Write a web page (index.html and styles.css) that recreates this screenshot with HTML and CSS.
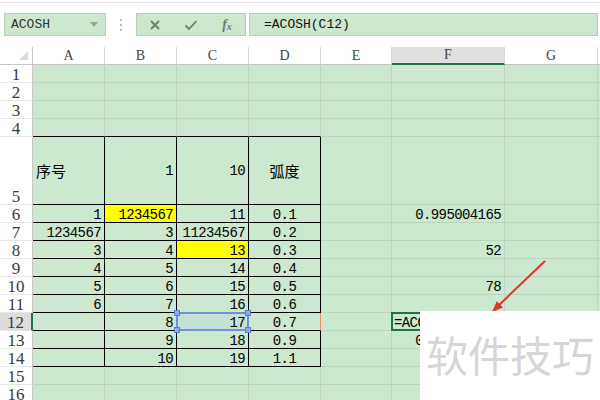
FILE: index.html
```html
<!DOCTYPE html>
<html>
<head>
<meta charset="utf-8">
<link rel="stylesheet" href="styles.css">
</head>
<body>
<div class="app">
  <div class="topline"></div>
  <div class="toolbar">
    <div class="namebox"><span>ACOSH</span><svg class="caret" width="8" height="5" viewBox="0 0 8 5"><path d="M0 0H8L4 5Z"/></svg></div>
    <div class="grip"><i></i><i></i><i></i></div>
    <div class="btns">
      <span class="btn"><svg width="12" height="12" viewBox="0 0 12 12"><path d="M2 2L10 10M10 2L2 10"/></svg></span>
      <span class="btn"><svg width="14" height="12" viewBox="0 0 14 12"><path d="M1.5 6.5L5 10L12.5 2"/></svg></span>
      <span class="btn fx"><i>f</i><i class="sx">x</i></span>
    </div>
    <div class="formula">=ACOSH(C12)</div>
  </div>

  <div class="sheet">
    <div class="corner"><svg width="33" height="18" viewBox="0 0 33 18"><path d="M28 4V13H19Z"/></svg></div>
    <div class="ch">A</div><div class="ch">B</div><div class="ch">C</div><div class="ch">D</div><div class="ch">E</div><div class="ch act">F</div><div class="ch">G</div><div class="ch"></div>

    <div class="rh">1</div><div class="c"></div><div class="c"></div><div class="c"></div><div class="c"></div><div class="c"></div><div class="c"></div><div class="c"></div><div class="c"></div>
    <div class="rh">2</div><div class="c"></div><div class="c"></div><div class="c"></div><div class="c"></div><div class="c"></div><div class="c"></div><div class="c"></div><div class="c"></div>
    <div class="rh">3</div><div class="c"></div><div class="c"></div><div class="c"></div><div class="c"></div><div class="c"></div><div class="c"></div><div class="c"></div><div class="c"></div>
    <div class="rh">4</div><div class="c tb"></div><div class="c tb"></div><div class="c tb"></div><div class="c tb"></div><div class="c"></div><div class="c"></div><div class="c"></div><div class="c"></div>

    <div class="rh">5</div><div class="c b l vc cjk">序号</div><div class="c b r vc">1</div><div class="c b r vc">10</div><div class="c b m vc cjk">弧度</div><div class="c"></div><div class="c"></div><div class="c"></div><div class="c"></div>

    <div class="rh">6</div><div class="c b r">1</div><div class="c b r y">1234567</div><div class="c b r">11</div><div class="c b m">0.1</div><div class="c"></div><div class="c r">0.995004165</div><div class="c"></div><div class="c"></div>
    <div class="rh">7</div><div class="c b r">1234567</div><div class="c b r">3</div><div class="c b r">11234567</div><div class="c b m">0.2</div><div class="c"></div><div class="c"></div><div class="c"></div><div class="c"></div>
    <div class="rh">8</div><div class="c b r">3</div><div class="c b r">4</div><div class="c b r y">13</div><div class="c b m">0.3</div><div class="c"></div><div class="c r">52</div><div class="c"></div><div class="c"></div>
    <div class="rh">9</div><div class="c b r">4</div><div class="c b r">5</div><div class="c b r">14</div><div class="c b m">0.4</div><div class="c"></div><div class="c"></div><div class="c"></div><div class="c"></div>
    <div class="rh">10</div><div class="c b r">5</div><div class="c b r">6</div><div class="c b r">15</div><div class="c b m">0.5</div><div class="c"></div><div class="c r">78</div><div class="c"></div><div class="c"></div>
    <div class="rh">11</div><div class="c b r">6</div><div class="c b r">7</div><div class="c b r">16</div><div class="c b m">0.6</div><div class="c"></div><div class="c"></div><div class="c"></div><div class="c"></div>
    <div class="rh act">12</div><div class="c b r"></div><div class="c b r">8</div><div class="c b r sel">17<span class="hd tl"></span><span class="hd tr"></span><span class="hd bl"></span><span class="hd br"></span></div><div class="c b m ref">0.7</div><div class="c"></div><div class="c l edit">=ACOSH(C12)</div><div class="c"></div><div class="c"></div>
    <div class="rh">13</div><div class="c b r"></div><div class="c b r">9</div><div class="c b r">18</div><div class="c b m">0.9</div><div class="c"></div><div class="c r">0.622362503</div><div class="c"></div><div class="c"></div>
    <div class="rh">14</div><div class="c b r"></div><div class="c b r">10</div><div class="c b r">19</div><div class="c b m">1.1</div><div class="c"></div><div class="c"></div><div class="c"></div><div class="c"></div>
    <div class="rh">15</div><div class="c"></div><div class="c"></div><div class="c"></div><div class="c"></div><div class="c"></div><div class="c"></div><div class="c"></div><div class="c"></div>
    <div class="rh">16</div><div class="c"></div><div class="c"></div><div class="c"></div><div class="c"></div><div class="c"></div><div class="c"></div><div class="c"></div><div class="c"></div>
  </div>

  <svg class="arrow" width="600" height="400" viewBox="0 0 600 400">
    <line x1="545" y1="261" x2="498" y2="306"/>
    <polygon points="492,312 503,307.6 496.8,301.2"/>
  </svg>
  <div class="wm">软件技巧</div>
</div>
</body>
</html>
```

FILE: styles.css
```css
* { box-sizing: border-box; }
body {
  margin: 0;
  font-family: "Liberation Mono", "Noto Sans CJK SC", monospace;
  background: #fff;
}
.app {
  position: relative;
  width: 600px;
  height: 400px;
  overflow: hidden;
  background: #fff;
}
.topline {
  height: 1px;
  margin-top: 2px;
  background: #e3e3e3;
}
.toolbar {
  display: flex;
  align-items: flex-start;
  height: 44px;
  padding-top: 10px;
}
.namebox {
  margin-left: 4px;
  width: 102px;
  height: 23px;
  background: #cde8ce;
  border: 1px solid #b9ccba;
  display: flex;
  align-items: center;
  justify-content: space-between;
  padding: 0 7px 0 6px;
  font-size: 13px;
  color: #333;
}
.caret path { fill: #9aa39b; }
.grip {
  width: 30px;
  height: 23px;
  display: flex;
  flex-direction: column;
  align-items: center;
  justify-content: center;
  gap: 3px;
}
.grip i {
  width: 2px;
  height: 2px;
  background: #bdbdbd;
}
.btns {
  width: 110px;
  height: 23px;
  background: #cde8ce;
  border: 1px solid #b9ccba;
  display: flex;
}
.btn {
  flex: 1;
  display: flex;
  align-items: center;
  justify-content: center;
}
.btn svg path {
  fill: none;
  stroke: #6c7c6d;
  stroke-width: 1.8;
}
.fx {
  font-family: "Liberation Serif", serif;
  font-size: 14px;
  color: #6c7c6d;
  font-weight: bold;
}
.fx .sx {
  font-size: 10px;
  margin-top: 4px;
}
.formula {
  flex: 1;
  margin-left: 3px;
  margin-right: 2px;
  height: 23px;
  background: #cde8ce;
  border: 1px solid #b9ccba;
  display: flex;
  align-items: center;
  padding-left: 14px;
  font-size: 13px;
  color: #111;
}

.sheet {
  display: grid;
  grid-template-columns: 33px 72px 72px 72px 72px 71px 113px 93px 3px;
  grid-template-rows: 18px repeat(4, 18px) 68px repeat(11, 18px);
}
.corner {
  background: #fff;
  border-right: 1px solid #c8c8c8;
  border-bottom: 1px solid #c8c8c8;
}
.corner svg { display: block; }
.corner path { fill: #dcdcdc; }
.ch {
  background: #fff;
  border-right: 1px solid #dadada;
  border-bottom: 1px solid #c6c6c6;
  display: flex;
  justify-content: center;
  align-items: center;
  font-family: "Liberation Serif", serif;
  font-size: 14px;
  color: #444;
}
.ch.act {
  background: #e0e0e0;
  border-bottom: 2px solid #217346;
}
.rh {
  background: #fff;
  border-right: 1px solid #c8c8c8;
  border-bottom: 1px solid #e6e6e6;
  display: flex;
  justify-content: center;
  align-items: flex-end;
  font-family: "Liberation Serif", serif;
  font-size: 17px;
  line-height: 14px;
  color: #3a3a3a;
}
.rh.act {
  background: #dcdcdc;
  border-right: 2px solid #217346;
}
.c {
  background: #cce8ce;
  border-right: 1px solid #bcd4be;
  border-bottom: 1px solid #bcd4be;
  display: flex;
  align-items: flex-end;
  padding: 0 3px;
  font-size: 14px;
  letter-spacing: -0.6px;
  line-height: 14px;
  color: #000;
  white-space: nowrap;
}
.r { justify-content: flex-end; }
.m { justify-content: center; }
.l { justify-content: flex-start; }
.vc { align-items: center; }
.b {
  border-right-color: #000;
  border-bottom-color: #000;
}
.tb { border-bottom-color: #000; }
.y { background: #ffff00; }
.cjk {
  font-family: "Noto Sans CJK SC", sans-serif;
  font-size: 15px;
  letter-spacing: 0;
  line-height: 20px;
}
.ref { border-right-color: #ef8a72; }

.sel {
  position: relative;
  background: #c5e0d5;
}
.sel::before {
  content: "";
  position: absolute;
  left: -1px;
  top: -1px;
  right: -1px;
  bottom: -1px;
  border: 2px solid #6f90da;
}
.hd {
  position: absolute;
  width: 6px;
  height: 6px;
  background: #8fabe6;
  border: 1px solid #5a7fd2;
}
.tl { left: -3px; top: -3px; }
.tr { right: -3px; top: -3px; }
.bl { left: -3px; bottom: -3px; }
.br { right: -3px; bottom: -3px; }

.edit {
  position: relative;
  padding-left: 2px;
}
.edit::before {
  content: "";
  position: absolute;
  left: -1px;
  top: -1px;
  right: -1px;
  bottom: -1px;
  border: 2px solid #217346;
}

.arrow {
  position: absolute;
  left: 0;
  top: 0;
}
.arrow line {
  stroke: #e0322c;
  stroke-width: 2;
}
.arrow polygon { fill: #e0322c; }

.wm {
  position: absolute;
  left: 420px;
  top: 311px;
  width: 180px;
  height: 89px;
  background: #fff;
  padding: 22px 0 0 6px;
  font-family: "Noto Sans CJK SC", sans-serif;
  font-size: 42px;
  line-height: 42px;
  color: #d6d6d6;
  white-space: nowrap;
}
```
